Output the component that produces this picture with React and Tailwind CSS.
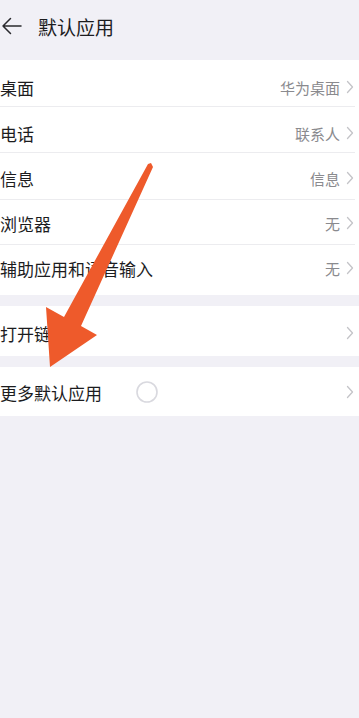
import React from 'react'

const font = { fontFamily: '"Noto Sans CJK SC", "Noto Sans", sans-serif' }

function Chevron() {
  return (
    <svg width="8" height="14" viewBox="0 0 8 14" className="ml-[6px]">
      <path d="M1.5 1.5 L6.5 7 L1.5 12.5" fill="none" stroke="#c4c4c8" strokeWidth="1.3" strokeLinecap="round" strokeLinejoin="round" />
    </svg>
  )
}

function Row({ label, value, last, size }) {
  return (
    <div className={'relative flex items-center pr-[5px] bg-white ' + size}>
      <span className="text-[17px] text-[#1c1c1e] leading-none">{label}</span>
      <span className="ml-auto text-[15px] text-[#8a8a8e] leading-none">{value}</span>
      <Chevron />
      {!last && <div className="absolute left-0 right-[4px] bottom-0 h-px bg-[#ececef]" />}
    </div>
  )
}

function App() {
  // row heights and text offsets read off the screenshot
  const main = [
    { label: '桌面', value: '华为桌面', size: 'h-[47px] pt-[7px]' },
    { label: '电话', value: '联系人', size: 'h-[46px] pt-[6px]' },
    { label: '信息', value: '信息', size: 'h-[47px] pt-[3px]' },
    { label: '浏览器', value: '无', size: 'h-[45px] pt-[1px]' },
    { label: '辅助应用和语音输入', value: '无', size: 'h-[50px] pb-[4px]' },
  ]

  return (
    <div className="relative w-[359px] h-[718px] bg-[#f1f0f6] overflow-hidden" style={font}>
      <header className="flex items-center h-[60px] pb-[8px]">
        <svg width="22" height="20" viewBox="0 0 22 20" className="ml-[1px]">
          <path d="M20 10 H2 M9.5 2.5 L2 10 L9.5 17.5" fill="none" stroke="#2a2a2e" strokeWidth="1.5" strokeLinecap="round" strokeLinejoin="round" />
        </svg>
        <h1 className="ml-[15px] text-[19px] text-[#1c1c1e] leading-none">默认应用</h1>
      </header>

      <section className="bg-white">
        {main.map((r, i) => (
          <Row key={r.label} label={r.label} value={r.value} size={r.size} last={i === main.length - 1} />
        ))}
      </section>

      <section className="mt-[11px] bg-white">
        <div className="h-[50px] flex items-center pt-[4px] pr-[5px]">
          <span className="text-[17px] text-[#1c1c1e] leading-none">打开链接</span>
          <span className="ml-auto" />
          <Chevron />
        </div>
      </section>

      <section className="mt-[11px] bg-white">
        <div className="h-[49px] flex items-center pt-[1px] pr-[5px]">
          <span className="text-[17px] text-[#1c1c1e] leading-none">更多默认应用</span>
          <svg width="24" height="24" viewBox="0 0 24 24" className="ml-[33px]">
            <circle cx="12" cy="12" r="10" fill="none" stroke="#d9d9df" strokeWidth="1.6" />
          </svg>
          <span className="ml-auto" />
          <Chevron />
        </div>
      </section>

      <svg className="absolute left-0 top-0 pointer-events-none" width="359" height="718" viewBox="0 0 359 718">
        <polygon
          points="148,164 151,163 153,167 81,326 97,335 50,367 46,307 64,317"
          fill="#ee5a2b"
        />
      </svg>
    </div>
  )
}

export default App
